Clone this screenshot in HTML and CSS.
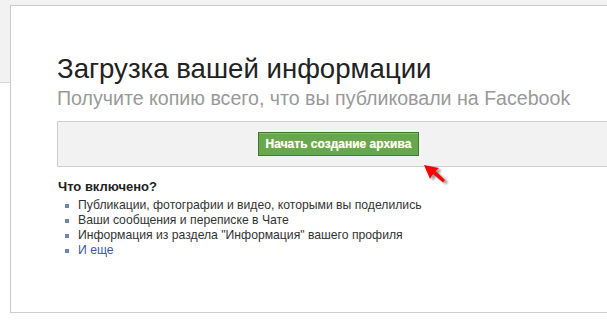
FILE: index.html
```html
<!DOCTYPE html>
<html lang="ru">
<head>
<meta charset="utf-8">
<link rel="stylesheet" href="styles.css">
</head>
<body>
<div class="page">
  <div class="side"></div>
  <div class="main">
    <div class="panel">
      <h1 class="title">Загрузка вашей информации</h1>
      <p class="subtitle">Получите копию всего, что вы публиковали на Facebook</p>
      <div class="actionbar">
        <button class="btn">Начать создание архива</button>
        <svg class="arrow" width="36" height="32" viewBox="0 0 36 32">
          <defs>
            <filter id="sh" x="-30%" y="-30%" width="160%" height="160%">
              <feGaussianBlur stdDeviation="1.2"/>
            </filter>
          </defs>
          <path d="M5 9 L20 12 L16.5 15 L26 24 L24 26.5 L14 18 L11 23 Z" fill="#000" opacity="0.4" filter="url(#sh)"/>
          <path d="M2 7 L17 10 L13.5 13 L23 22 L21 24.5 L11 16 L8 21 Z" fill="#ff0000"/>
        </svg>
      </div>
      <h2 class="included">Что включено?</h2>
      <ul class="items">
        <li>Публикации, фотографии и видео, которыми вы поделились</li>
        <li>Ваши сообщения и переписке в Чате</li>
        <li>Информация из раздела "Информация" вашего профиля</li>
        <li><a class="more" href="#">И еще</a></li>
      </ul>
    </div>
  </div>
</div>
</body>
</html>
```

FILE: styles.css
```css
html, body {
  margin: 0;
  padding: 0;
  overflow: hidden;
  background: #fff;
}
.page {
  display: flex;
  width: 760px;
}
.side {
  width: 10px;
  height: 83px;
  flex: none;
  background: #f2f2f2;
  border-bottom: 1px solid #d6d6d6;
  box-sizing: border-box;
}
.main {
  flex: 1;
  border-top: 5px solid #f2f2f2;
}
.panel {
  height: 308px;
  box-sizing: border-box;
  border: 1px solid #cccccc;
  border-right: none;
  background: #fff;
  padding: 46px 0 0 46px;
}
.title {
  margin: 0;
  font-family: "Liberation Sans", Arial, sans-serif;
  font-weight: normal;
  font-size: 27.6px;
  line-height: 34px;
  color: #222;
}
.subtitle {
  margin: 0;
  font-family: "Liberation Sans", Arial, sans-serif;
  font-size: 19.6px;
  line-height: 24px;
  color: #999;
}
.actionbar {
  position: relative;
  margin-top: 11px;
  width: 564px;
  height: 46px;
  box-sizing: border-box;
  border: 1px solid #cccccc;
  background: #f2f2f2;
  display: flex;
  justify-content: center;
  align-items: center;
}
.btn {
  margin-left: -1px;
  height: 24px;
  padding: 0 7px;
  border: 1px solid #3f7a28;
  background: #69a74e;
  color: #fff;
  font-family: "Liberation Sans", Arial, sans-serif;
  font-weight: bold;
  font-size: 12px;
  text-shadow: 0 0 1px #c9e27a;
  box-shadow: inset 0 1px 0 #85bb6c;
}
.arrow {
  position: absolute;
  left: 364px;
  top: 36px;
}
.included {
  margin: 12px 0 0 1px;
  font-family: "Liberation Sans", Arial, sans-serif;
  font-weight: bold;
  font-size: 13px;
  line-height: 16px;
  color: #222;
}
.items {
  margin: 3px 0 0 0;
  padding: 0 0 0 21px;
  list-style: none;
  font-family: "Liberation Sans", Arial, sans-serif;
  font-size: 12.2px;
  line-height: 15px;
  color: #333;
}
.items li {
  position: relative;
}
.items li::before {
  content: "";
  position: absolute;
  left: -13px;
  top: 6px;
  width: 4px;
  height: 4px;
  background: #6d84b4;
}
.more {
  color: #3b5998;
  text-decoration: none;
}
```
